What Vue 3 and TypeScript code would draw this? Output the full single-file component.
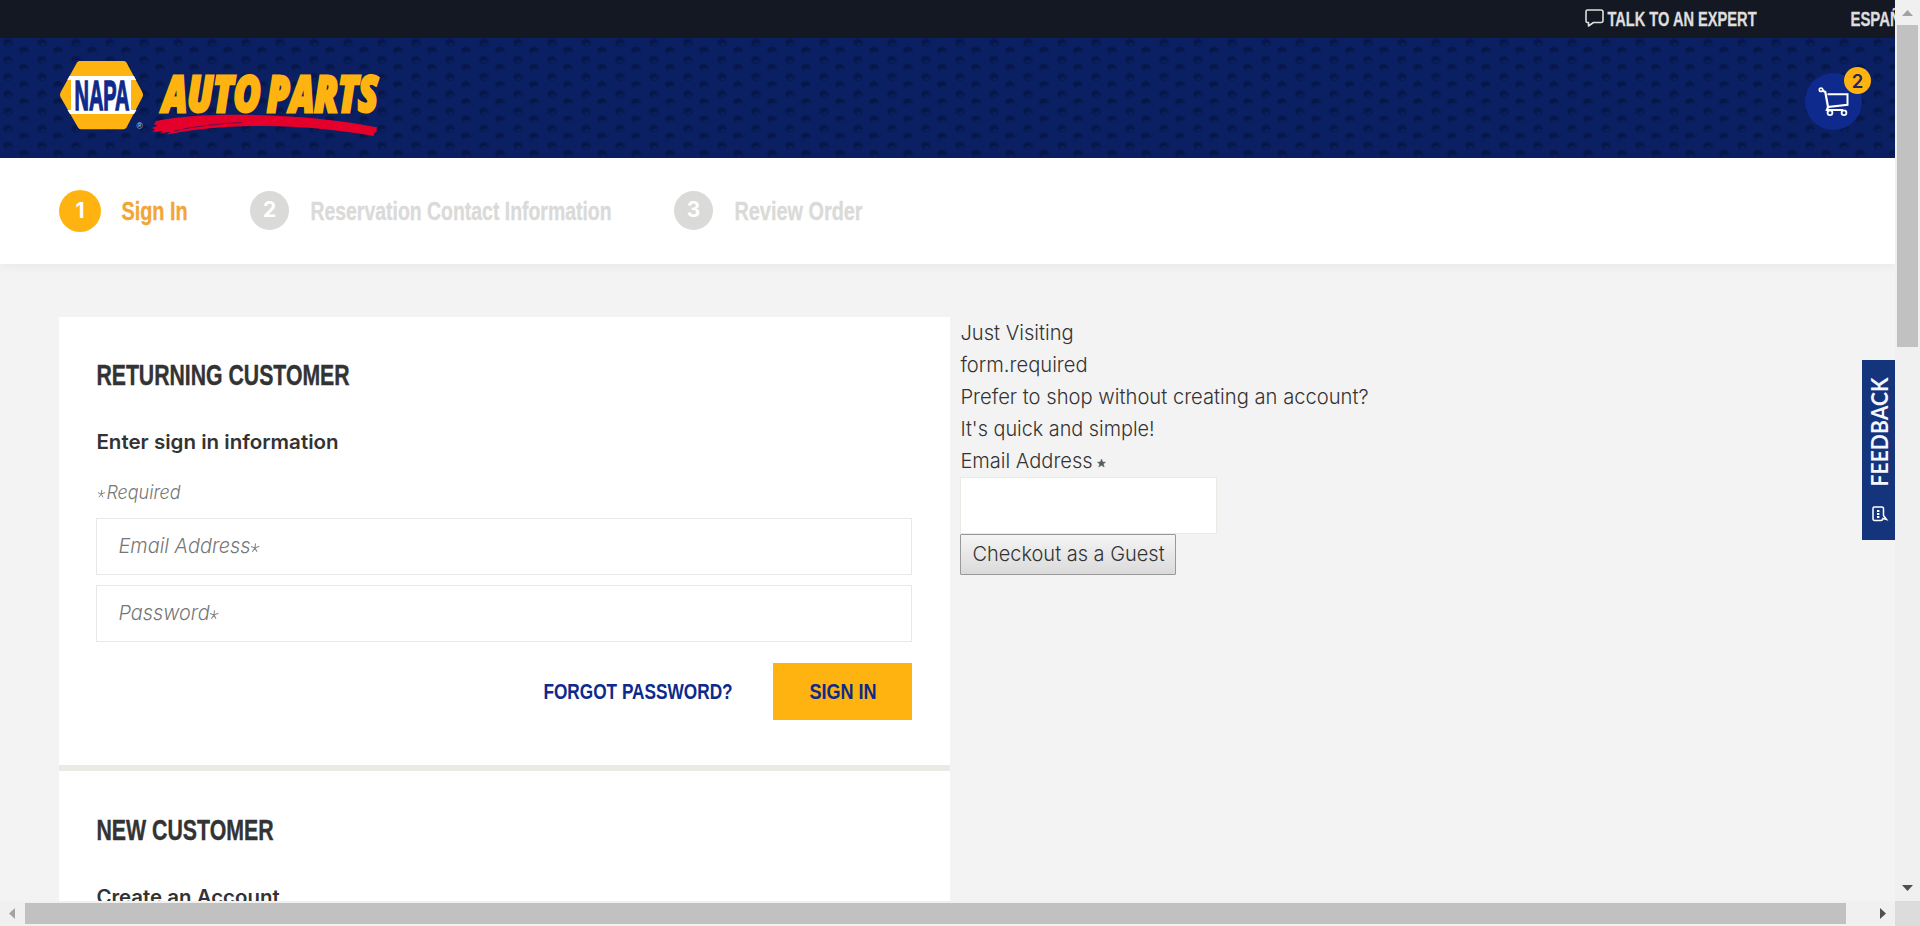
<script setup lang="ts">
import { h, type FunctionalComponent } from 'vue'

interface FitProps {
  text: string
  w: number
  lh: number
  base: number
  size: number
  family?: string
  weight?: number
  slant?: boolean
  thick?: number
}

/* One line of text set to a fixed measure, used for the condensed brand face. */
const FitText: FunctionalComponent<FitProps> = (p) =>
  h('svg', { class: 'fit', width: p.w, height: p.lh, style: { display: 'block', overflow: 'visible', flex: 'none' } }, [
    h('text', {
      x: -0.6,
      y: p.base,
      fill: 'currentColor',
      stroke: p.thick ? 'currentColor' : 'none',
      'stroke-width': p.thick ?? 0,
      textLength: p.w + 1.2,
      lengthAdjust: 'spacingAndGlyphs',
      'font-size': p.size,
      'font-weight': p.weight ?? 400,
      'font-style': p.slant ? 'italic' : 'normal',
      'font-family': p.family ?? '"Liberation Sans", Arial, sans-serif',
    }, p.text),
  ])
FitText.props = ['text', 'w', 'lh', 'base', 'size', 'family', 'weight', 'slant', 'thick']

const narrow = '"Liberation Sans Narrow", "Liberation Sans", Arial, sans-serif'
const light = 'Inter, "Liberation Sans", sans-serif'

const steps = [
  { n: 1, label: 'Sign In', w: 65, active: true },
  { n: 2, label: 'Reservation Contact Information', w: 300, active: false },
  { n: 3, label: 'Review Order', w: 127, active: false },
]

const guestLines = [
  { text: 'Just Visiting', w: 112 },
  { text: 'form.required', w: 126 },
  { text: 'Prefer to shop without creating an account?', w: 407 },
  { text: "It's quick and simple!", w: 193 },
]

const fields = [
  { label: 'Email Address', w: 131 },
  { label: 'Password', w: 90 },
]
</script>

<template>
  <div class="window">
    <div class="page">
      <div class="topbar">
        <a class="expert">
          <svg width="19" height="19" viewBox="0 0 19 19" fill="none" stroke="#dedede" stroke-width="1.6" stroke-linejoin="round">
            <path d="M2.5 1H16q2 0 2 2v8.500q0 2-2 2H8.500L3.500 17V13.500H2.500Q1 13.500 1 12V2.500Q1 1 2.500 1Z" />
          </svg>
          <FitText text="TALK TO AN EXPERT" :w="148" :lh="38" :base="26" :size="19.5" :weight="700" :thick="0.3" :family="narrow" />
        </a>
        <FitText text="ESPAÑOL" :w="70" :lh="38" :base="26" :size="19.5" :weight="700" :thick="0.3" :family="narrow" />
      </div>

      <header class="header">
        <svg class="texture" width="1895" height="120">
          <defs>
            <pattern id="studs" x="0" y="0" width="34" height="17.2" patternUnits="userSpaceOnUse">
              <ellipse cx="8" cy="4.600" rx="5.300" ry="4.300" fill="#06184d" opacity=".6" />
              <ellipse cx="7.500" cy="3.800" rx="3.500" ry="2.500" fill="#05143f" opacity=".5" />
              <ellipse cx="8.800" cy="6.300" rx="2" ry="1.400" fill="#0a2063" />
              <ellipse cx="24" cy="12.300" rx="5.300" ry="4" fill="#06184d" opacity=".6" />
              <ellipse cx="23.500" cy="11.300" rx="3.800" ry="2.300" fill="#05143f" opacity=".6" />
              <ellipse cx="25" cy="14.800" rx="2.300" ry="1.500" fill="#0a2063" />
            </pattern>
          </defs>
          <rect width="1895" height="120" fill="url(#studs)" />
        </svg>
        <svg class="logo" width="324" height="80" viewBox="59 60 324 80">
          <path d="M79.300 61H124Q125.500 61 126.500 62.500L142.500 92.500Q143.500 94.700 142.500 97L126.500 127.500Q125.500 129.300 123.500 129.300H80.500Q79 129.300 78 127.500L60.500 97Q59.500 94.700 60.500 92.500L77 62.500Q78 61 79.300 61Z" fill="#ffb310" />
          <path d="M69.500 76H134L136 80H131V110H136.500L134 114H70L67.500 110H71V80H67.300Z" fill="#fff" />
          <text x="74.500" y="110" font-family="Liberation Sans Narrow, Liberation Sans, sans-serif" font-weight="700" font-size="43" textLength="55" lengthAdjust="spacingAndGlyphs" fill="#0d2a8c" stroke="#0d2a8c" stroke-width="1.500">NAPA</text>
          <text x="136.500" y="129" font-family="Liberation Sans" font-size="8.500" fill="#c5cbe0">®</text>
          <g font-family="Open Sans" font-weight="800" font-style="italic" font-size="49" fill="#ffb310" stroke="#ffb310" stroke-width="3">
            <text x="162.500" y="112.200" textLength="98" lengthAdjust="spacingAndGlyphs">AUTO</text>
            <text x="267" y="112.200" textLength="111" lengthAdjust="spacingAndGlyphs">PARTS</text>
          </g>
          <path d="M156 121C185 115 225 113.500 270 115.500C310 117 345 121 377.500 127.500L376 129.500L377 131L374.500 133L373.500 136C340 130 300 126 265 126C225 126 195 129 167 134.500L170 131.800L160 133.500L163 131L152 132L155 129.500L152 128L158 125.500L154 124.500Z" fill="#e5002b" />
          <path d="M174 131Q205 124 242 122.500" fill="none" stroke="#0a2063" stroke-width=".6" />
        </svg>
        <div class="cart">
          <svg width="32" height="30" viewBox="0 0 32 30" fill="none" stroke="#fff" stroke-width="2.200">
            <circle cx="3" cy="2.700" r="1.700" stroke-width="1.700" />
            <path d="M4.500 3.500L7.300 5L10.300 21.500" />
            <path d="M9.500 7.200H29.500V17.800L10 20L8.800 23H25" stroke-width="2" />
            <circle cx="12" cy="25.800" r="2.400" stroke-width="1.800" />
            <circle cx="26" cy="25.800" r="2.400" stroke-width="1.800" />
          </svg>
          <span class="badge">2</span>
        </div>
      </header>

      <nav class="steps">
        <div v-for="s in steps" :key="s.n" class="step" :class="{ active: s.active }">
          <span class="num">{{ s.n }}</span>
          <FitText :text="s.label" :w="s.w" :lh="42" :base="30" :size="25" :weight="700" :thick="0.3" :family="narrow" />
        </div>
      </nav>

      <main class="main">
        <section class="cards">
          <div class="card returning">
            <FitText text="RETURNING CUSTOMER" :w="252" :lh="68" :base="68" :size="29.5" :weight="700" :thick="0.4" :family="narrow" />
            <FitText text="Enter sign in information" :w="241" :lh="64" :base="64" :size="20" :weight="600" family="Inter" />
            <div class="required">
              <svg width="9" height="50" viewBox="0 0 9 50" fill="none" stroke="#888" stroke-width="1"><path d="M4.800 41L4.300 45L2 48.300M1 43.700L4.300 45L8 43.500M4.300 45L6 48.300" /></svg>
              <FitText text="Required" :w="73" :lh="50" :base="49.500" :size="18.500" :family="light" :weight="300" :slant="true" />
            </div>
            <div class="fields">
              <div v-for="f in fields" :key="f.label" class="field">
                <FitText :text="f.label" :w="f.w" :lh="55" :base="34" :size="20.5" :family="light" :weight="300" :slant="true" />
                <svg width="10" height="55" viewBox="0 0 10 55" fill="none" stroke="#888" stroke-width="1.100"><path d="M5.500 24.500L5 29L2.300 32.800M1 27.500L5 29L9.300 27.300M5 29L7 32.800" /></svg>
              </div>
            </div>
            <div class="actions">
              <FitText text="FORGOT PASSWORD?" :w="188" :lh="57" :base="36" :size="22.500" :weight="700" :family="narrow" />
              <button class="signin"><FitText text="SIGN IN" :w="66" :lh="57" :base="36" :size="22.500" :weight="700" :family="narrow" /></button>
            </div>
          </div>
          <div class="card fresh">
            <FitText text="NEW CUSTOMER" :w="176" :lh="69" :base="69" :size="29.5" :weight="700" :thick="0.4" :family="narrow" />
            <FitText text="Create an Account" :w="182" :lh="64" :base="64" :size="20" :weight="600" family="Inter" />
          </div>
        </section>

        <section class="guest">
          <FitText v-for="l in guestLines" :key="l.text" :text="l.text" :w="l.w" :lh="32" :base="23" :size="20.5" :family="light" :weight="300" />
          <div class="label">
            <FitText text="Email Address" :w="131" :lh="32" :base="23" :size="20.5" :family="light" :weight="300" />
            <svg width="9" height="32" viewBox="0 0 9 32"><path d="M4.500 14L5.600 17L8.500 17.200L6.300 19L7.200 22L4.500 20.300L1.800 22L2.700 19L.5 17.200L3.400 17Z" fill="#555b63" stroke="#555b63" stroke-width=".5" /></svg>
          </div>
          <div class="guest-input"></div>
          <button class="guest-btn"><FitText text="Checkout as a Guest" :w="191" :lh="39" :base="26" :size="20.5" :family="light" :weight="300" /></button>
        </section>
      </main>

      <div class="feedback">
        <svg width="33" height="180" viewBox="0 0 33 180">
          <text transform="translate(26 126.500) rotate(-90)" font-family="Lato, sans-serif" font-weight="700" font-size="22.800" textLength="109" lengthAdjust="spacingAndGlyphs" fill="#f4f7ff">FEEDBACK</text>
          <path d="M12 147H20Q21.500 147 21.500 149V155.500L24.500 159.500L21 158.500Q20.500 160.500 19 160.500H12.500Q11 160.500 11 158.500V148.500Q11 147 12 147Z" fill="none" stroke="#fff" stroke-width="1.500" />
          <path d="M16.200 150V158" stroke="#fff" stroke-width="2.400" stroke-dasharray="2 1" />
        </svg>
      </div>
    </div>

    <div class="vbar">
      <svg width="25" height="25"><path d="M7 16L12.500 10L18 16Z" fill="#a3a3a3" /></svg>
      <div class="vthumb"></div>
      <svg width="25" height="25"><path d="M7 9L12.500 15L18 9Z" fill="#505050" /></svg>
    </div>
    <div class="hbar">
      <svg width="25" height="25"><path d="M15 7L9 12.500L15 18Z" fill="#a3a3a3" /></svg>
      <div class="hthumb"></div>
      <svg width="25" height="25"><path d="M10 7L16 12.500L10 18Z" fill="#505050" /></svg>
    </div>
    <div class="corner"></div>
  </div>
</template>

<style>
body {
  margin: 0;
  overflow: hidden;
}
</style>

<style scoped>
.window {
  display: grid;
  grid-template: 901px 25px / 1895px 25px;
  width: 1920px;
  height: 926px;
  font-family: 'Liberation Sans', Arial, sans-serif;
  color: #333;
}
.page {
  position: relative;
  overflow: hidden;
  background: #f3f3f3;
}
svg {
  display: block;
  flex: none;
}
.topbar {
  display: flex;
  justify-content: flex-end;
  gap: 95px;
  height: 38px;
  margin-right: -26px;
  background: #141823;
  color: #dedede;
}
.expert {
  display: flex;
  gap: 4px;
}
.expert > svg:first-child {
  margin-top: 9px;
}
.header {
  position: relative;
  display: flex;
  justify-content: space-between;
  height: 120px;
  background: #0a2063;
}
.texture {
  position: absolute;
  inset: 0;
}
.logo {
  position: relative;
  margin: 22px 0 0 59px;
}
.cart {
  position: relative;
  box-sizing: border-box;
  width: 57px;
  height: 57px;
  margin: 35px 33px 0 0;
  padding: 14px 0 0 13px;
  border-radius: 50%;
  background: #0d2a8c;
}
.badge {
  position: absolute;
  top: -6px;
  right: -9px;
  width: 27px;
  height: 27px;
  border-radius: 50%;
  background: #ffb310;
  color: #23285f;
  font: 600 18.5px/28px Inter, sans-serif;
  text-align: center;
}
.steps {
  position: relative;
  display: flex;
  gap: 63px;
  box-sizing: border-box;
  height: 106px;
  padding: 32px 0 0 59px;
  background: #fff;
  box-shadow: 0 2px 10px rgba(0, 0, 0, 0.05);
}
.step {
  display: flex;
  align-items: flex-start;
  gap: 22px;
  color: #dadad8;
}
.num {
  width: 39px;
  height: 39px;
  margin-top: 1px;
  border-radius: 50%;
  background: #dadad8;
  color: #fff;
  font: 700 21px/37px Inter, sans-serif;
  text-align: center;
}
.step.active {
  gap: 21px;
  color: #f3a536;
}
.active .num {
  width: 42px;
  height: 42px;
  margin-top: 0;
  line-height: 41px;
  background: #ffb310;
}
.main {
  display: flex;
  gap: 10px;
  padding: 53px 0 0 59px;
}
.cards {
  width: 891px;
}
.card {
  box-sizing: border-box;
  padding: 0 38px 0 37px;
  background: #fff;
}
.card > .fit {
  margin-left: 1px;
}
.returning {
  height: 454px;
  border-bottom: 6px solid #ebebe6;
}
.fresh {
  height: 300px;
}
.required {
  display: flex;
  gap: 1px;
  margin-left: 1px;
  color: #777;
}
.fields {
  display: grid;
  gap: 10px;
  margin-top: 19px;
}
.field {
  display: flex;
  box-sizing: border-box;
  height: 57px;
  padding-left: 22px;
  border: 1px solid #e8e8e8;
  color: #777;
}
.actions {
  display: flex;
  justify-content: flex-end;
  gap: 41px;
  margin-top: 21px;
  color: #0d2a8c;
}
.signin {
  width: 139px;
  height: 57px;
  padding: 0 0 0 37px;
  border: 0;
  background: #ffb310;
  color: #0d2a8c;
}
.guest > .fit,
.label {
  margin-left: 1px;
}
.label {
  display: flex;
  gap: 5px;
}
.guest-input {
  box-sizing: border-box;
  width: 257px;
  height: 57px;
  border: 1px solid #ebebe6;
  background: #fff;
}
.guest-btn {
  box-sizing: border-box;
  display: block;
  width: 216px;
  height: 41px;
  padding: 0 0 0 12px;
  border: 1px solid #999;
  border-radius: 1px;
  background: linear-gradient(#f5f5f5, #dadada);
  color: #333;
}
.feedback {
  position: absolute;
  top: 360px;
  right: 0;
  background: #14347c;
}
.vbar {
  display: flex;
  flex-direction: column;
  justify-content: space-between;
  background: #f0f0f0;
}
.vthumb {
  width: 21px;
  height: 322px;
  margin: 0 2px auto;
  background: #c1c1c1;
}
.hbar {
  display: flex;
  background: #f0f0f0;
}
.hthumb {
  width: 1821px;
  height: 21px;
  margin: 2px auto 0 0;
  background: #c1c1c1;
}
.corner {
  background: #dcdcdc;
}
</style>
